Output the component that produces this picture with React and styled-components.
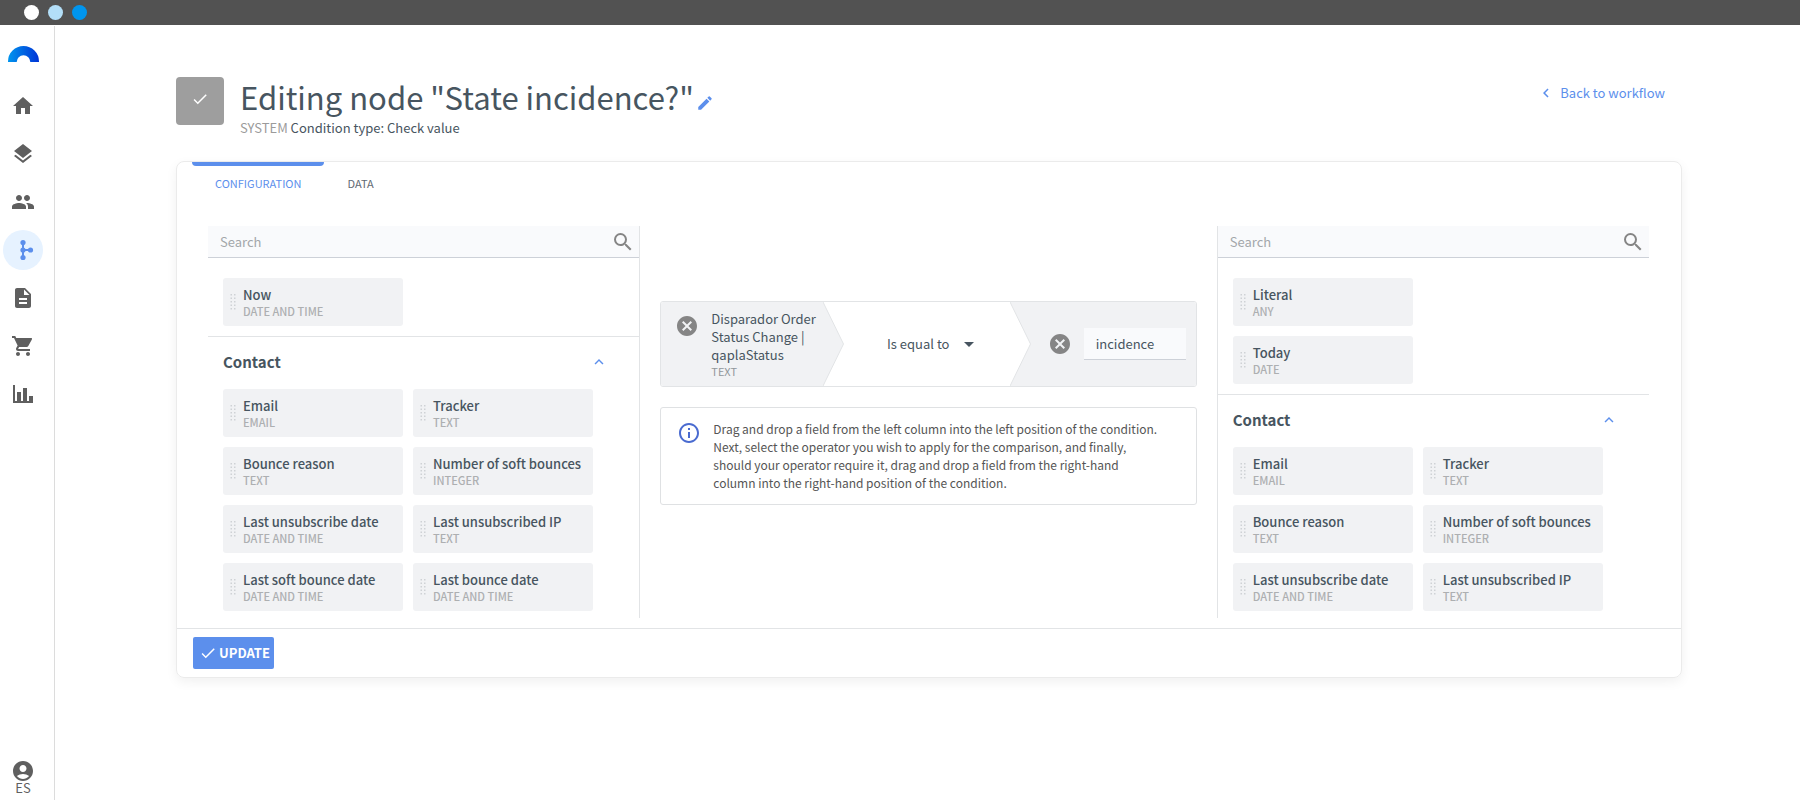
import React, { useState } from "react";
import styled, { createGlobalStyle } from "styled-components";
import {
  MdAccountCircle,
  MdArrowDropDown,
  MdCancel,
  MdCheck,
  MdChevronLeft,
  MdCreate,
  MdDescription,
  MdExpandLess,
  MdHome,
  MdInfoOutline,
  MdLayers,
  MdPeople,
  MdSearch,
  MdShoppingCart,
} from "react-icons/md";

const GlobalStyle = createGlobalStyle`
  * {
    box-sizing: border-box;
  }
  body {
    margin: 0;
    background: #fff;
    color: #475560;
    font-family: "Noto Sans CJK SC", "Noto Sans", sans-serif;
    font-size: 13px;
    line-height: 18px;
  }
  button, input, select {
    font: inherit;
    color: inherit;
    margin: 0;
    padding: 0;
    border: none;
    background: none;
  }
  button {
    cursor: pointer;
  }
  svg {
    display: block;
    flex-shrink: 0;
  }
`;

const Page = styled.div`
  display: flex;
  flex-direction: column;
  min-height: 100vh;
`;

const WindowBar = styled.div`
  display: flex;
  align-items: center;
  gap: 9px;
  height: 25px;
  padding-left: 24px;
  background: #525252;
`;

const Dot = styled.span`
  width: 15px;
  height: 15px;
  border-radius: 50%;
  background: ${({ $color }) => $color};
`;

const Body = styled.div`
  display: flex;
  flex: 1;
`;

const Sidebar = styled.nav`
  display: flex;
  flex-direction: column;
  align-items: flex-start;
  gap: 8px;
  width: 55px;
  margin-top: 1px;
  padding: 20px 3px 7px;
  border-right: 1px solid #dcdcdc;
  color: #5f5f5f;
`;

const LogoLink = styled.a`
  padding: 0 5px;
  margin-bottom: 16px;
`;

const NavLink = styled.a`
  display: flex;
  align-items: center;
  justify-content: center;
  width: 40px;
  height: 40px;
  border-radius: 50%;
  color: ${({ $active }) => ($active ? "#5c8fec" : "inherit")};
  background: ${({ $active }) => ($active ? "#e6f2ff" : "transparent")};
`;

const UserButton = styled.button`
  display: flex;
  flex-direction: column;
  align-items: center;
  width: 40px;
  margin-top: auto;
  line-height: 10px;
`;

const Main = styled.main`
  flex: 1;
  min-width: 0;
  padding: 52px 118px 40px 121px;
`;

const Header = styled.header`
  display: flex;
  align-items: flex-start;
  height: 84px;
`;

const NodeBadge = styled.div`
  display: flex;
  align-items: center;
  justify-content: center;
  width: 48px;
  height: 48px;
  margin-right: 16px;
  padding-bottom: 4px;
  border-radius: 4px;
  background: #9e9e9e;
  color: #fff;
`;

const TitleRow = styled.div`
  display: flex;
  align-items: center;
  gap: 2px;
`;

const Title = styled.h1`
  margin: 0;
  font-size: 31px;
  font-weight: 400;
  line-height: 40px;
`;

const EditButton = styled.button`
  padding-top: 12px;
  color: #5c8fec;
`;

const Subtitle = styled.p`
  margin: 2px 0 0;
`;

const Muted = styled.span`
  color: #9b9b9b;
`;

const BackLink = styled.a`
  display: flex;
  align-items: center;
  gap: 5px;
  margin: 7px 17px 0 auto;
  color: #5c8fec;
  text-decoration: none;
`;

const Card = styled.section`
  border: 1px solid #ebebeb;
  border-radius: 8px;
  box-shadow: 0 4px 12px rgba(0, 0, 0, 0.06);
`;

const Tabs = styled.div`
  display: flex;
  padding-left: 15px;
`;

const Tab = styled.button`
  height: 42px;
  padding: 0 23px;
  font-size: 11px;
  color: ${({ $active }) => ($active ? "#5c8fec" : "#5f6a73")};

  &::before {
    content: "";
    display: block;
    height: 4px;
    margin: 0 -23px 8px;
    border-radius: 0 0 4px 4px;
    background: ${({ $active }) => ($active ? "#5c8fec" : "transparent")};
  }
  &::after {
    content: "";
    display: block;
    height: 12px;
  }
`;

const Columns = styled.div`
  display: flex;
  padding: 22px 32px 10px 31px;
`;

const FieldPanel = styled.div`
  width: 30%;
  border-${({ $side }) => ($side === "left" ? "right" : "left")}: 1px solid #e2e4e6;
`;

const SearchBox = styled.label`
  display: flex;
  align-items: center;
  height: 32px;
  padding: 0 4px 0 12px;
  border-bottom: 1px solid #cdd1d8;
  background: #f9fafc;
  color: #858585;
`;

const SearchInput = styled.input`
  flex: 1;
  min-width: 0;
  height: 30px;
  outline: none;

  &::placeholder {
    color: #a3a7aa;
    opacity: 1;
  }
`;

const FieldGroup = styled.div`
  padding: 20px 0 10px 15px;
  border-bottom: 1px solid #e2e4e6;
`;

const GroupSection = styled.div`
  padding: 0 0 7px 15px;
`;

const GroupHeader = styled.button`
  display: flex;
  align-items: center;
  justify-content: space-between;
  width: 100%;
  height: 52px;
  padding: 0 31px 2px 0;
  font-size: 15px;
  font-weight: 700;

  svg {
    color: #5c8fec;
  }
`;

const FieldGrid = styled.div`
  display: flex;
  flex-wrap: wrap;
  gap: 10px;
  max-width: 370px;
  flex-direction: ${({ $stack }) => ($stack ? "column" : "row")};
`;

const FieldItem = styled.div`
  display: flex;
  align-items: center;
  gap: 6px;
  width: 180px;
  height: 48px;
  padding-left: 7px;
  border-radius: 3px;
  background: #f1f2f4;
  cursor: grab;
`;

const FieldName = styled.div`
  font-weight: 500;
  line-height: 18px;
  white-space: nowrap;
`;

const FieldType = styled.div`
  font-size: 11px;
  font-weight: 500;
  line-height: 14px;
  color: #adafb1;
`;

const Builder = styled.div`
  display: flex;
  flex-direction: column;
  flex: 1;
  gap: 20px;
  min-width: 0;
  padding: 75px 20px 0;
`;

const Condition = styled.div`
  display: flex;
  height: 86px;
  border: 1px solid #e2e4e6;
  border-radius: 3px;
  overflow: hidden;
`;

const LeftOperand = styled.div`
  display: flex;
  gap: 12px;
  width: 162px;
  padding: 8px 4px 0 14px;
  background: #f1f2f4;
`;

const Operator = styled.div`
  display: flex;
  align-items: center;
  justify-content: center;
  flex: 1;
  padding-left: 14px;
`;

const OperatorSelect = styled.select`
  appearance: none;
  width: 70px;
  height: 32px;
  outline: none;
`;

const RightOperand = styled.div`
  display: flex;
  align-items: center;
  gap: 12px;
  width: 165px;
  padding: 0 10px 0 17px;
  background: #f1f2f4;
`;

const RemoveButton = styled.button`
  align-self: ${({ $top }) => ($top ? "flex-start" : "center")};
  padding-top: ${({ $top }) => ($top ? "4px" : "0")};
  color: #858585;
`;

const OperandType = styled(FieldType)`
  font-weight: 400;
  color: #92979b;
`;

const ValueInput = styled.input`
  flex: 1;
  min-width: 0;
  height: 32px;
  padding: 0 12px;
  border-bottom: 1px solid #cdd1d8;
  background: #f9fafc;
  outline: none;
`;

const InfoBox = styled.div`
  display: flex;
  gap: 12px;
  padding: 12px 34px 12px 16px;
  border: 1px solid #dfe1e3;
  border-radius: 3px;
  color: #555;

  svg {
    margin-top: 1px;
    color: #4a6bd0;
  }
`;

const InfoText = styled.p`
  margin: 0;
  font-size: 12px;
`;

const Footer = styled.footer`
  padding: 8px 16px;
  border-top: 1px solid #e2e4e6;
`;

const UpdateButton = styled.button`
  display: flex;
  align-items: center;
  gap: 2px;
  height: 32px;
  padding: 0 4px 0 6px;
  border-radius: 2px;
  background: #5c8fec;
  color: #fff;
  font-weight: 700;
`;

const contactFields = [
  { name: "Email", type: "EMAIL" },
  { name: "Tracker", type: "TEXT" },
  { name: "Bounce reason", type: "TEXT" },
  { name: "Number of soft bounces", type: "INTEGER" },
  { name: "Last unsubscribe date", type: "DATE AND TIME" },
  { name: "Last unsubscribed IP", type: "TEXT" },
  { name: "Last soft bounce date", type: "DATE AND TIME" },
  { name: "Last bounce date", type: "DATE AND TIME" },
];

const Logo = () => (
  <svg width="31" height="16" viewBox="0 0 31 16">
    <defs>
      <linearGradient id="logo" x1="0" x2="1" y1="0" y2="0">
        <stop offset="0" stopColor="#0095ee" />
        <stop offset="1" stopColor="#0033d6" />
      </linearGradient>
    </defs>
    <path
      d="M0 16V15.500A15.500 15.500 0 0 1 31 15.500V16H22.300A6.800 6.800 0 0 0 8.700 16Z"
      fill="url(#logo)"
    />
  </svg>
);

const WorkflowIcon = () => (
  <svg width="24" height="24" viewBox="0 0 24 24" fill="currentColor">
    <path d="M12 4V20M12 12H20" stroke="currentColor" strokeWidth="2" />
    <circle cx="12" cy="4.500" r="2.600" />
    <circle cx="12" cy="12" r="2.600" />
    <circle cx="12" cy="19.500" r="2.600" />
    <circle cx="19.500" cy="12" r="2.600" />
  </svg>
);

const ChartIcon = () => (
  <svg width="24" height="24" viewBox="0 0 24 24" fill="currentColor">
    <path d="M2 3H4V19H22V21H2ZM6 10H10V19H6ZM12 6H16V19H12ZM18 14H22V19H18Z" />
  </svg>
);

const DragHandle = () => (
  <svg width="7" height="18" viewBox="0 0 7 18" fill="#cfd2d5">
    {[1, 4.5, 8, 11.5, 15].map((y) => (
      <g key={y}>
        <rect x="0.500" y={y} width="1.500" height="1.500" />
        <rect x="4" y={y} width="1.500" height="1.500" />
      </g>
    ))}
  </svg>
);

// Arrow between two parts of the condition
const Arrow = ({ left, right }) => (
  <svg width="21" height="84" viewBox="0 0 21 84">
    <rect width="21" height="84" fill={right} />
    <path d="M0 0L20.500 42L0 84Z" fill={left} />
    <path d="M0 0L20.500 42L0 84" fill="none" stroke="#e2e4e6" />
  </svg>
);

const Field = ({ name, type }) => (
  <FieldItem draggable>
    <DragHandle />
    <div>
      <FieldName>{name}</FieldName>
      <FieldType>{type}</FieldType>
    </div>
  </FieldItem>
);

const Panel = ({ side, topFields, fields }) => {
  const [search, setSearch] = useState("");
  const [open, setOpen] = useState(true);

  const matches = (field) =>
    field.name.toLowerCase().includes(search.toLowerCase());

  return (
    <FieldPanel $side={side}>
      <SearchBox>
        <SearchInput
          aria-label="Search"
          placeholder="Search"
          value={search}
          onChange={(e) => setSearch(e.target.value)}
        />
        <MdSearch size={24} />
      </SearchBox>
      <FieldGroup>
        <FieldGrid $stack>
          {topFields.filter(matches).map((field) => (
            <Field key={field.name} {...field} />
          ))}
        </FieldGrid>
      </FieldGroup>
      <GroupSection>
        <GroupHeader aria-expanded={open} onClick={() => setOpen(!open)}>
          Contact
          <MdExpandLess size={18} />
        </GroupHeader>
        {open && (
          <FieldGrid>
            {fields.filter(matches).map((field) => (
              <Field key={field.name} {...field} />
            ))}
          </FieldGrid>
        )}
      </GroupSection>
    </FieldPanel>
  );
};

const App = () => {
  const [tab, setTab] = useState("CONFIGURATION");
  const [value, setValue] = useState("incidence");

  return (
    <Page>
      <GlobalStyle />
      <WindowBar>
        <Dot $color="#fff" />
        <Dot $color="#b3dff8" />
        <Dot $color="#0095ee" />
      </WindowBar>
      <Body>
        <Sidebar>
          <LogoLink href="#" aria-label="Dashboard">
            <Logo />
          </LogoLink>
          <NavLink href="#" aria-label="Home">
            <MdHome size={24} />
          </NavLink>
          <NavLink href="#" aria-label="Layers">
            <MdLayers size={24} />
          </NavLink>
          <NavLink href="#" aria-label="Contacts">
            <MdPeople size={24} />
          </NavLink>
          <NavLink href="#" aria-label="Workflows" $active>
            <WorkflowIcon />
          </NavLink>
          <NavLink href="#" aria-label="Documents">
            <MdDescription size={24} />
          </NavLink>
          <NavLink href="#" aria-label="Orders">
            <MdShoppingCart size={24} />
          </NavLink>
          <NavLink href="#" aria-label="Reports">
            <ChartIcon />
          </NavLink>
          <UserButton>
            <MdAccountCircle size={24} />
            ES
          </UserButton>
        </Sidebar>
        <Main>
          <Header>
            <NodeBadge>
              <MdCheck size={18} />
            </NodeBadge>
            <div>
              <TitleRow>
                <Title>Editing node "State incidence?"</Title>
                <EditButton aria-label="Edit name">
                  <MdCreate size={18} />
                </EditButton>
              </TitleRow>
              <Subtitle>
                <Muted>SYSTEM</Muted> Condition type: Check value
              </Subtitle>
            </div>
            <BackLink href="#">
              <MdChevronLeft size={18} />
              Back to workflow
            </BackLink>
          </Header>
          <Card>
            <Tabs>
              {["CONFIGURATION", "DATA"].map((name) => (
                <Tab
                  key={name}
                  $active={tab === name}
                  onClick={() => setTab(name)}
                >
                  {name}
                </Tab>
              ))}
            </Tabs>
            <Columns>
              <Panel
                side="left"
                topFields={[{ name: "Now", type: "DATE AND TIME" }]}
                fields={contactFields}
              />
              <Builder>
                <Condition>
                  <LeftOperand>
                    <RemoveButton $top aria-label="Remove left field">
                      <MdCancel size={24} />
                    </RemoveButton>
                    <div>
                      Disparador Order Status Change | qaplaStatus
                      <OperandType>TEXT</OperandType>
                    </div>
                  </LeftOperand>
                  <Arrow left="#f1f2f4" right="#fff" />
                  <Operator>
                    <OperatorSelect aria-label="Operator">
                      <option>Is equal to</option>
                    </OperatorSelect>
                    <MdArrowDropDown size={24} />
                  </Operator>
                  <Arrow left="#fff" right="#f1f2f4" />
                  <RightOperand>
                    <RemoveButton aria-label="Remove right field">
                      <MdCancel size={24} />
                    </RemoveButton>
                    <ValueInput
                      aria-label="Value"
                      value={value}
                      onChange={(e) => setValue(e.target.value)}
                    />
                  </RightOperand>
                </Condition>
                <InfoBox>
                  <MdInfoOutline size={24} />
                  <InfoText>
                    Drag and drop a field from the left column into the left
                    position of the condition. Next, select the operator you
                    wish to apply for the comparison, and finally, should your
                    operator require it, drag and drop a field from the
                    right-hand column into the right-hand position of the
                    condition.
                  </InfoText>
                </InfoBox>
              </Builder>
              <Panel
                side="right"
                topFields={[
                  { name: "Literal", type: "ANY" },
                  { name: "Today", type: "DATE" },
                ]}
                fields={contactFields.slice(0, 6)}
              />
            </Columns>
            <Footer>
              <UpdateButton>
                <MdCheck size={18} />
                UPDATE
              </UpdateButton>
            </Footer>
          </Card>
        </Main>
      </Body>
    </Page>
  );
};

export default App;
